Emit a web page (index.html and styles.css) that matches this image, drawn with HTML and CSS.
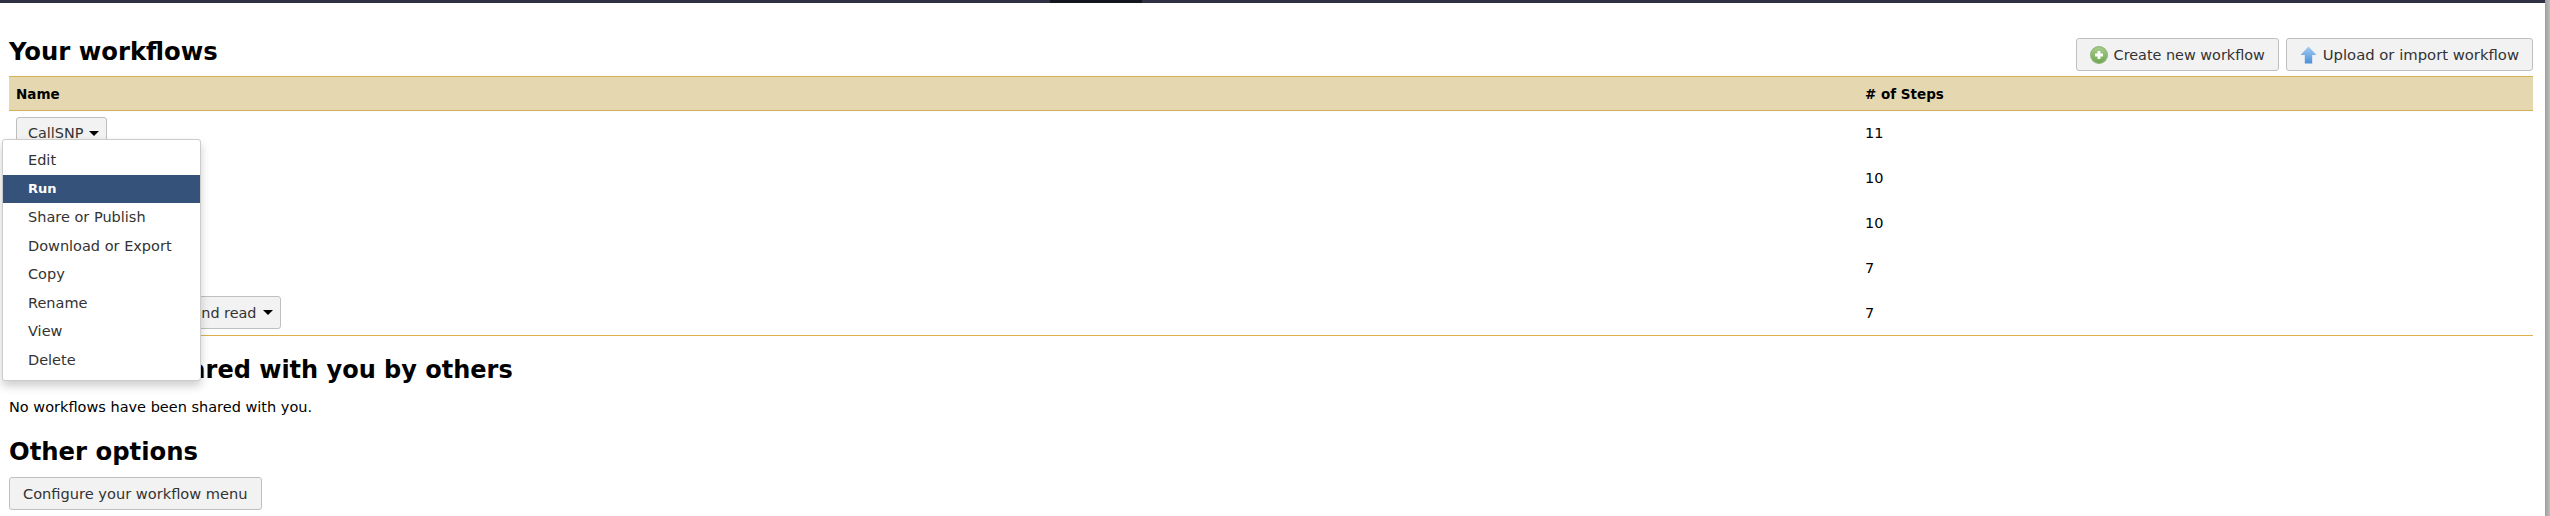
FILE: index.html
```html
<!DOCTYPE html>
<html>
<head>
  <meta charset="utf-8">
  <title>Your workflows</title>
  <link rel="stylesheet" href="styles.css">
</head>
<body>
  <div class="masthead"><div class="masthead-tab"></div></div>

  <div class="page">
    <div class="title-row">
      <h2>Your workflows</h2>
      <div class="actions">
        <a class="btn btn-icon">
          <svg width="18" height="18" viewBox="0 0 16 16">
            <defs>
              <linearGradient id="green" x1="0" y1="0" x2="0" y2="1">
                <stop offset="0" stop-color="#a9cf8a"/>
                <stop offset="1" stop-color="#6fa552"/>
              </linearGradient>
            </defs>
            <circle cx="8" cy="8" r="7.5" fill="url(#green)" stroke="#8fb67a" stroke-width="1"/>
            <path d="M6.7 4.5h2.6v2.2h2.2v2.6H9.3v2.2H6.7V9.3H4.5V6.7h2.2z" fill="#fff"/>
          </svg>
          Create new workflow
        </a>
        <a class="btn btn-icon btn-upload">
          <svg width="17" height="18" viewBox="0 0 17 18">
            <defs>
              <linearGradient id="blue" x1="0" y1="0" x2="0" y2="1">
                <stop offset="0" stop-color="#a5cdf2"/>
                <stop offset="1" stop-color="#4a90d9"/>
              </linearGradient>
            </defs>
            <path d="M8.5.5l8 8.5h-4.3v8.5H4.8V9H.5z" fill="url(#blue)"/>
          </svg>
          Upload or import workflow
        </a>
      </div>
    </div>

    <table class="grid">
      <thead>
        <tr><th class="col-name">Name</th><th># of Steps</th></tr>
      </thead>
      <tbody>
        <tr><td><a class="btn btn-drop">CallSNP <i class="caret"></i></a></td><td>11</td></tr>
        <tr><td></td><td>10</td></tr>
        <tr><td></td><td>10</td></tr>
        <tr><td></td><td>7</td></tr>
        <tr><td><a class="btn btn-drop">Quality filter and trim, end read <i class="caret"></i></a></td><td>7</td></tr>
      </tbody>
    </table>

    <h2 class="shared-title">Workflows shared with you by others</h2>
    <p class="note">No workflows have been shared with you.</p>

    <h2 class="options-title">Other options</h2>
    <a class="btn btn-wide">Configure your workflow menu</a>
  </div>

  <ul class="menu">
    <li>Edit</li>
    <li class="active">Run</li>
    <li>Share or Publish</li>
    <li>Download or Export</li>
    <li>Copy</li>
    <li>Rename</li>
    <li>View</li>
    <li>Delete</li>
  </ul>

  <div class="scroll-edge"></div>
</body>
</html>
```

FILE: styles.css
```css
body {
  margin: 0;
  height: 516px;
  overflow: hidden;
  background: #fff;
  color: #000;
  font-family: "DejaVu Sans", sans-serif;
  font-size: 14.5px;
  position: relative;
}

.masthead {
  height: 3px;
  background: #2f3144;
  display: flex;
}
.masthead-tab {
  width: 92px;
  margin-left: 1050px;
  background: #14161f;
}

.page {
  padding: 0 17px 0 9px;
}

h2 {
  margin: 0;
  font-size: 24.3px;
  line-height: 30px;
  font-weight: bold;
}

.title-row {
  display: flex;
  justify-content: space-between;
  align-items: flex-end;
  padding-top: 35px;
  height: 35px;
}
.title-row h2 {
  padding-bottom: 6px;
}

.actions {
  display: flex;
  gap: 7px;
  margin-bottom: 2px;
}

.btn {
  display: inline-flex;
  align-items: center;
  gap: 4px;
  box-sizing: border-box;
  height: 33px;
  padding: 0 13px;
  border: 1px solid #bfbfbf;
  border-radius: 3px;
  background: #f2f2f2;
  color: #333;
  font-size: 14.4px;
  white-space: nowrap;
}
.btn-icon {
  gap: 6px;
}
.btn-upload {
  font-size: 14.8px;
}
.btn-drop {
  gap: 6px;
  padding: 0 7px 0 11px;
}
.btn-wide {
  font-size: 14.6px;
}

.caret {
  display: inline-block;
  border-top: 5px solid #000;
  border-left: 5px solid transparent;
  border-right: 5px solid transparent;
}

.grid {
  width: 100%;
  margin-top: 3px;
  border-collapse: collapse;
  table-layout: fixed;
}
.grid th {
  height: 33px;
  padding: 0 7px;
  background: #e5d8b1;
  border-top: 1px solid #d2b158;
  border-bottom: 1px solid #d2b158;
  text-align: left;
  font-size: 13.5px;
}
.grid .col-name {
  width: 1835px;
}
.grid td {
  height: 44px;
  padding: 0 7px 1px;
}
.grid tbody tr:last-child td {
  height: 43px;
  border-bottom: 1px solid #d9b24c;
}

.shared-title {
  margin-top: 19px;
  font-size: 24px;
}
.note {
  margin: 13px 0 0;
  line-height: 18px;
}
.options-title {
  margin-top: 21px;
  margin-bottom: 10px;
}

.menu {
  position: absolute;
  left: 2px;
  top: 139px;
  width: 199px;
  box-sizing: border-box;
  margin: 0;
  padding: 6px 0;
  list-style: none;
  background: #fff;
  border: 1px solid #ccc;
  border-radius: 3px;
  box-shadow: 0 5px 10px rgba(0, 0, 0, 0.2);
}
.menu li {
  height: 28.5px;
  line-height: 28.5px;
  padding-left: 25px;
  color: #333;
  font-size: 14.5px;
}
.menu .active {
  background: #34527a;
  color: #fff;
  font-weight: bold;
  font-size: 13px;
}

.scroll-edge {
  position: absolute;
  top: 0;
  right: 0;
  bottom: 0;
  width: 5px;
  background: linear-gradient(to right, #9f9f9f, #bcbcbc);
}
```
